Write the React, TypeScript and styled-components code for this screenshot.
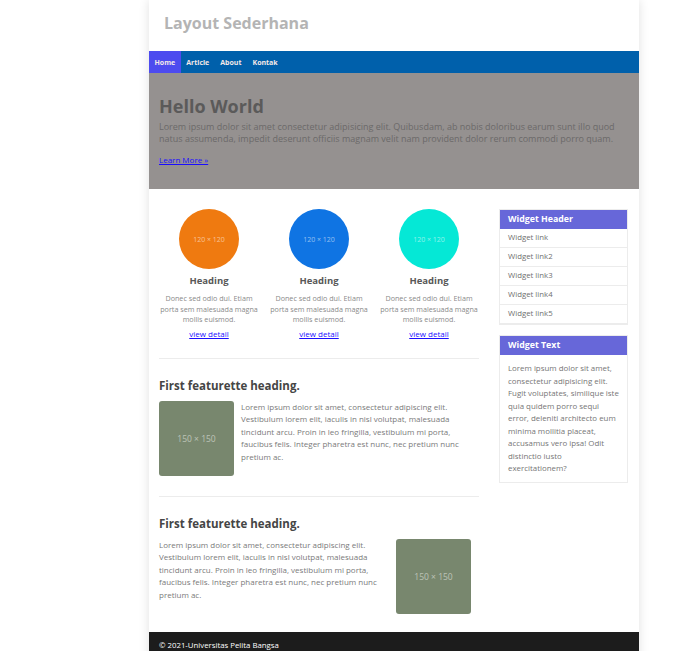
import React from "react";
import styled, { createGlobalStyle } from "styled-components";

const Global = createGlobalStyle`
  html, body { margin: 0; padding: 0; background: #fff; }
  body { font-family: "Open Sans", "Noto Sans", sans-serif; }
  * { box-sizing: border-box; }
`;

const Container = styled.div`
  width: 490px;
  margin-left: 149px;
  background: #fff;
  box-shadow: 0 0 10px rgba(0, 0, 0, 0.12);
  min-height: 651px;
`;

const Header = styled.header`
  height: 51px;
  padding: 12px 15px 0;
`;

const Title = styled.h1`
  margin: 0;
  font-size: 16px;
  font-weight: 700;
  color: #b4b4b4;
  line-height: 22px;
`;

const Nav = styled.nav`
  height: 22px;
  background: #0060ab;
  display: flex;
`;

const NavItem = styled.a<{ $active?: boolean }>`
  display: flex;
  align-items: center;
  padding: 0 5.5px;
  font-size: 7px;
  font-weight: 700;
  color: #f3e8e8;
  text-decoration: none;
  background: ${(p) => (p.$active ? "#4d4bef" : "transparent")};
`;

const Hero = styled.section`
  background: #959190;
  height: 116px;
  padding: 21px 10px 0;
`;

const HeroTitle = styled.h2`
  margin: 0 0 3px;
  font-size: 18px;
  font-weight: 700;
  color: #5b5a5a;
  line-height: 24px;
`;

const HeroText = styled.p`
  margin: 0 0 9px;
  font-size: 9px;
  line-height: 12px;
  color: #6b6969;
`;

const LinkLine = styled.div`
  font-size: 8px;
  line-height: 12px;
`;

const Link = styled.a`
  color: #1a0dff;
  text-decoration: underline;
`;

const Main = styled.div`
  display: flex;
  gap: 20px;
  padding: 20px 11px 0 10px;
`;

const Content = styled.div`
  width: 320px;
`;

const Cols = styled.div`
  display: grid;
  grid-template-columns: repeat(3, 100px);
  gap: 10px;
`;

const Col = styled.div`
  display: flex;
  flex-direction: column;
  align-items: center;
  text-align: center;
`;

const Circle = styled.div<{ $color: string }>`
  width: 60px;
  height: 60px;
  border-radius: 50%;
  background: ${(p) => p.$color};
  color: rgba(255, 255, 255, 0.55);
  font-size: 7px;
  display: flex;
  align-items: center;
  justify-content: center;
`;

const ColHeading = styled.h3`
  margin: 5px 0 5px;
  font-size: 9.5px;
  font-weight: 700;
  color: #585858;
  line-height: 14px;
`;

const ColText = styled.p`
  margin: 0 0 3px;
  font-size: 7.2px;
  line-height: 10.5px;
  color: #8a8a8a;
`;

const Hr = styled.hr<{ $m?: string }>`
  border: 0;
  border-top: 1px solid #ececec;
  margin: ${(p) => p.$m ?? "18px 0 0"};
`;

const Featurette = styled.section`
  padding-top: 19px;
`;

const FeatHeading = styled.h3`
  margin: 0 0 7px;
  font-size: 11.5px;
  font-weight: 700;
  color: #454545;
  line-height: 16px;
`;

const FeatRow = styled.div<{ $reverse?: boolean }>`
  display: flex;
  gap: ${(p) => (p.$reverse ? "0" : "7px")};
  flex-direction: ${(p) => (p.$reverse ? "row-reverse" : "row")};
  justify-content: ${(p) => (p.$reverse ? "space-between" : "flex-start")};
  align-items: flex-start;
`;

const Placeholder = styled.div<{ $mr?: number }>`
  width: 75px;
  height: 75px;
  flex: none;
  border-radius: 3px;
  background: #78876e;
  color: rgba(255, 255, 255, 0.5);
  font-size: 8.5px;
  display: flex;
  align-items: center;
  justify-content: center;
  margin-right: ${(p) => p.$mr ?? 0}px;
`;

const FeatText = styled.p<{ $w?: number }>`
  margin: 0;
  font-size: 8px;
  line-height: 12.5px;
  color: #7a7a7a;
  width: ${(p) => (p.$w ? `${p.$w}px` : "auto")};
`;

const Sidebar = styled.aside`
  width: 129px;
  display: flex;
  flex-direction: column;
  gap: 10px;
`;

const Widget = styled.div`
  border: 1px solid #ececec;
`;

const WidgetHeader = styled.div`
  background: #6767d9;
  color: #fff;
  font-size: 8.8px;
  font-weight: 700;
  height: 19px;
  line-height: 19px;
  padding: 0 8px;
`;

const WidgetLink = styled.a`
  display: block;
  height: 19px;
  line-height: 17px;
  padding: 0 8px;
  font-size: 7.8px;
  color: #6f6f6f;
  text-decoration: none;
  border-bottom: 1px solid #ececec;
`;

const WidgetBody = styled.p`
  margin: 0;
  padding: 7px 7px 7px 8px;
  font-size: 7.9px;
  line-height: 12.5px;
  color: #767676;
`;

const Footer = styled.footer`
  margin-top: 18px;
  background: #1c1c1c;
  color: #fff;
  font-size: 7.8px;
  line-height: 11px;
  padding: 8px 10px;
  height: 30px;
`;

const lorem =
  "Lorem ipsum dolor sit amet, consectetur adipiscing elit. Vestibulum lorem elit, iaculis in nisl volutpat, malesuada tincidunt arcu. Proin in leo fringilla, vestibulum mi porta, faucibus felis. Integer pharetra est nunc, nec pretium nunc pretium ac.";

const circles = ["#ef7a10", "#0f74e3", "#05e8d6"];

export default function App() {
  return (
    <>
      <Global />
      <Container>
        <Header>
          <Title>Layout Sederhana</Title>
        </Header>
        <Nav>
          <NavItem $active href="#">Home</NavItem>
          <NavItem href="#">Article</NavItem>
          <NavItem href="#">About</NavItem>
          <NavItem href="#">Kontak</NavItem>
        </Nav>
        <Hero>
          <HeroTitle>Hello World</HeroTitle>
          <HeroText>
            Lorem ipsum dolor sit amet consectetur adipisicing elit. Quibusdam, ab nobis doloribus earum sunt illo quod
            natus assumenda, impedit deserunt officiis magnam velit nam provident dolor rerum commodi porro quam.
          </HeroText>
          <LinkLine>
            <Link href="#">Learn More »</Link>
          </LinkLine>
        </Hero>
        <Main>
          <Content>
            <Cols>
              {circles.map((c) => (
                <Col key={c}>
                  <Circle $color={c}>120 × 120</Circle>
                  <ColHeading>Heading</ColHeading>
                  <ColText>Donec sed odio dui. Etiam porta sem malesuada magna mollis euismod.</ColText>
                  <LinkLine>
                    <Link href="#">view detail</Link>
                  </LinkLine>
                </Col>
              ))}
            </Cols>
            <Hr $m="18px 0 0" />
            <Featurette>
              <FeatHeading>First featurette heading.</FeatHeading>
              <FeatRow>
                <Placeholder>150 × 150</Placeholder>
                <FeatText $w={228}>{lorem}</FeatText>
              </FeatRow>
            </Featurette>
            <Hr $m="20px 0 0" />
            <Featurette>
              <FeatHeading>First featurette heading.</FeatHeading>
              <FeatRow $reverse>
                <Placeholder $mr={8}>150 × 150</Placeholder>
                <FeatText $w={228}>{lorem}</FeatText>
              </FeatRow>
            </Featurette>
          </Content>
          <Sidebar>
            <Widget>
              <WidgetHeader>Widget Header</WidgetHeader>
              <WidgetLink href="#">Widget link</WidgetLink>
              <WidgetLink href="#">Widget link2</WidgetLink>
              <WidgetLink href="#">Widget link3</WidgetLink>
              <WidgetLink href="#">Widget link4</WidgetLink>
              <WidgetLink href="#">Widget link5</WidgetLink>
            </Widget>
            <Widget>
              <WidgetHeader>Widget Text</WidgetHeader>
              <WidgetBody>
                Lorem ipsum dolor sit amet, consectetur adipisicing elit. Fugit voluptates, similique iste quia quidem
                porro sequi error, deleniti architecto eum minima mollitia placeat, accusamus vero ipsa! Odit
                distinctio iusto exercitationem?
              </WidgetBody>
            </Widget>
          </Sidebar>
        </Main>
        <Footer>© 2021-Universitas Pelita Bangsa</Footer>
      </Container>
    </>
  );
}
